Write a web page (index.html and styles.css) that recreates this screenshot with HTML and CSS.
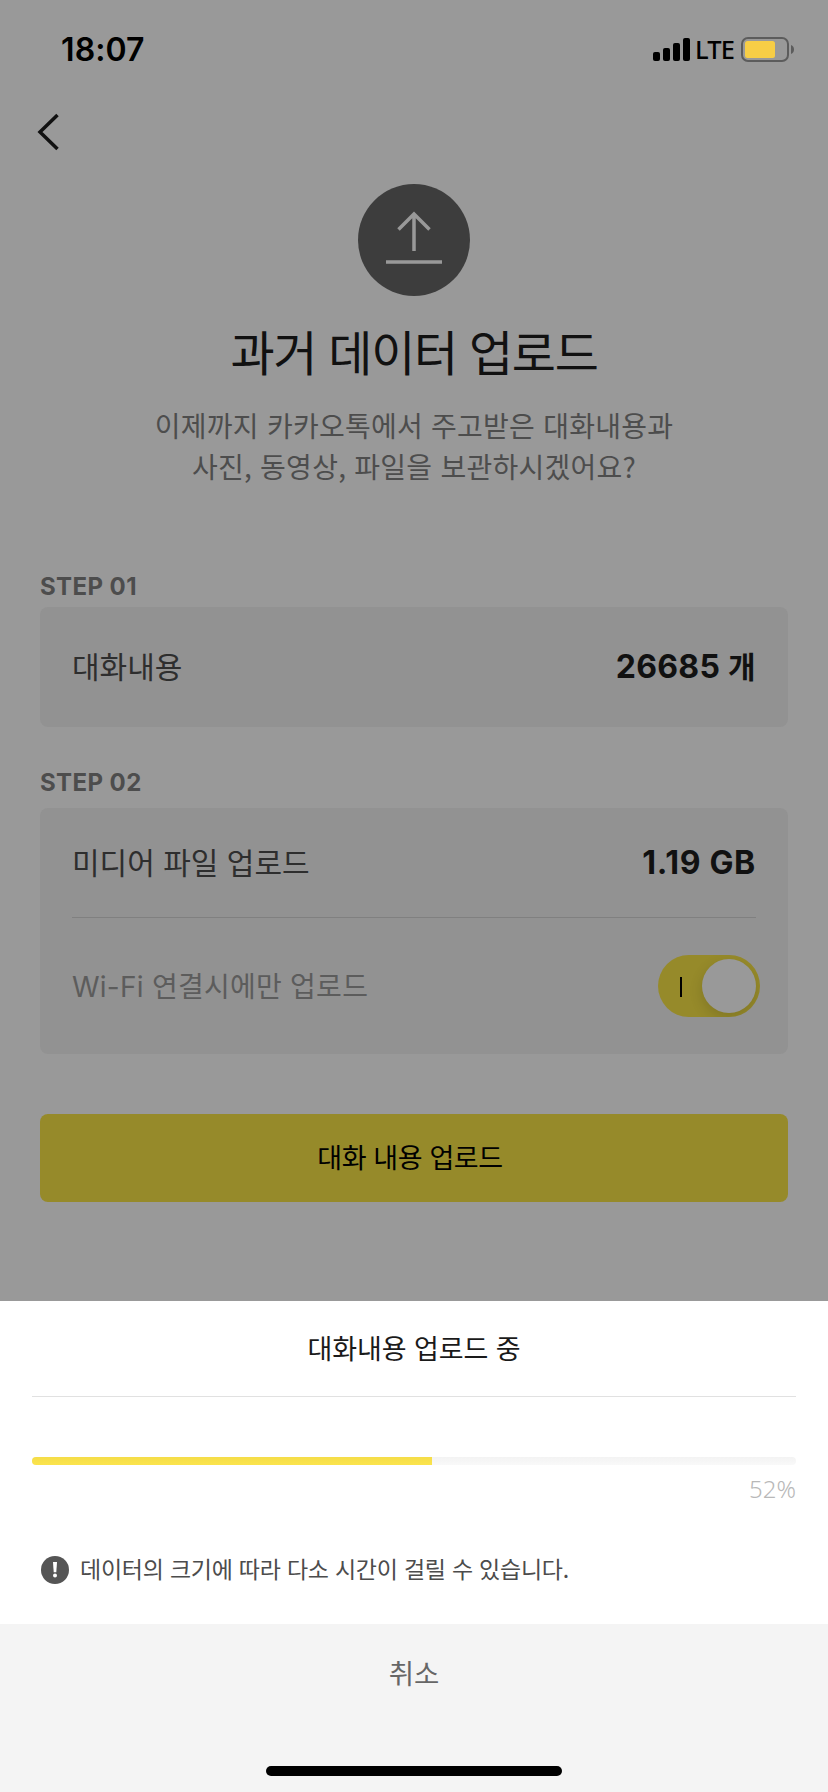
FILE: index.html
```html
<!DOCTYPE html>
<html lang="ko">
<head>
    <meta charset="UTF-8">
    <title>과거 데이터 업로드</title>
    <link rel="stylesheet" href="styles.css">
</head>
<body>
    <div class="screen">
        <!-- 상태바 -->
        <header class="status-bar">
            <span class="time">18:07</span>
            <div class="status-icons">
                <svg class="signal" width="37" height="23" viewBox="0 0 37 23">
                    <rect x="0" y="14" width="7" height="9" rx="2" />
                    <rect x="10" y="10" width="7" height="13" rx="2" />
                    <rect x="20" y="5" width="7" height="18" rx="2" />
                    <rect x="30" y="0" width="7" height="23" rx="2" />
                </svg>
                <span class="network">LTE</span>
                <svg class="battery" width="53" height="25" viewBox="0 0 53 25">
                    <rect x="1" y="1" width="46" height="23" rx="6" fill="none" stroke="#5c5c5c" stroke-width="2" />
                    <rect x="4" y="4" width="30" height="17" rx="2.5" fill="#f7ce46" />
                    <path d="M50 8c4 1.5 4 7.500 0 9z" fill="#5c5c5c" />
                </svg>
            </div>
        </header>

        <nav class="nav">
            <svg width="24" height="40" viewBox="0 0 24 40">
                <path d="M20.500 3L3 20l17.500 17" fill="none" stroke="#111" stroke-width="3.500" />
            </svg>
        </nav>

        <!-- 안내 -->
        <section class="intro">
            <svg class="upload-icon" width="112" height="112" viewBox="0 0 112 112">
                <circle cx="56" cy="56" r="56" fill="#3d3d3d" />
                <path d="M40.500 45.500L56 30l15.500 15.500M56 30v37M28 78h56" fill="none" stroke="#999" stroke-width="3.500" />
            </svg>
            <h1 class="title">과거 데이터 업로드</h1>
            <p class="desc">이제까지 카카오톡에서 주고받은 대화내용과<br>사진, 동영상, 파일을 보관하시겠어요?</p>
        </section>

        <!-- 업로드 단계 -->
        <main class="steps">
            <h2 class="step-name">STEP 01</h2>
            <div class="card card-chat">
                <div class="row">
                    <span class="label">대화내용</span>
                    <strong class="value">26685 <span class="unit">개</span></strong>
                </div>
            </div>

            <h2 class="step-name step-second">STEP 02</h2>
            <div class="card card-media">
                <div class="row row-size">
                    <span class="label">미디어 파일 업로드</span>
                    <strong class="value value-size">1.19 GB</strong>
                </div>
                <div class="row row-wifi">
                    <span class="label-sub">Wi-Fi 연결시에만 업로드</span>
                    <div class="toggle">
                        <span class="toggle-mark"></span>
                        <span class="toggle-knob"></span>
                    </div>
                </div>
            </div>

            <button class="upload-btn">대화 내용 업로드</button>
        </main>

        <!-- 진행 상태 시트 -->
        <section class="sheet">
            <div class="sheet-body">
                <h3 class="sheet-title">대화내용 업로드 중</h3>
                <div class="progress">
                    <div class="progress-fill" style="width: 52.4%"></div>
                </div>
                <div class="percent">52%</div>
                <div class="notice">
                    <svg width="28" height="28" viewBox="0 0 28 28">
                        <circle cx="14" cy="14" r="14" fill="#555" />
                        <path d="M12 6h4l-.7 10.300h-2.600z" fill="#fff" />
                        <circle cx="14" cy="19.500" r="2" fill="#fff" />
                    </svg>
                    <span class="notice-text">데이터의 크기에 따라 다소 시간이 걸릴 수 있습니다.</span>
                </div>
            </div>
            <footer class="sheet-footer">
                <button class="cancel-btn">취소</button>
                <div class="home-bar"></div>
            </footer>
        </section>
    </div>
</body>
</html>
```

FILE: styles.css
```css
* {
    box-sizing: border-box;
    margin: 0;
    padding: 0;
}

body {
    background: #999;
    font-family: "Noto Sans CJK KR", sans-serif;
    color: #111;
}

button {
    border: none;
    font-family: inherit;
}

svg {
    display: block;
    flex-shrink: 0;
}

.screen {
    display: flex;
    flex-direction: column;
    width: 828px;
    height: 1792px;
    overflow: hidden;
}

/* 상태바 */
.status-bar {
    display: flex;
    justify-content: space-between;
    height: 99px;
    padding: 0 34px 0 61px;
    color: #000;
    font-family: Inter, sans-serif;
}

.time {
    font-size: 32px;
    font-weight: 600;
    line-height: 100px;
    letter-spacing: 0.1px;
}

.status-icons {
    display: flex;
    align-items: center;
    height: 99px;
}

.network {
    width: 51px;
    margin-top: -2px;
    padding-left: 5px;
    font-family: "Noto Sans", sans-serif;
    font-size: 25.5px;
    font-weight: 500;
    letter-spacing: -0.8px;
}

/* 뒤로가기 */
.nav {
    height: 85px;
    padding: 13px 0 0 37px;
}

/* 안내 */
.intro {
    display: flex;
    flex-direction: column;
    align-items: center;
    height: 386px;
    text-align: center;
}

.title {
    margin-top: 19px;
    font-size: 48px;
    font-weight: 400;
    line-height: 70px;
    letter-spacing: -1.3px;
}

.desc {
    margin-top: 20px;
    color: #4d4d4d;
    font-size: 28px;
    line-height: 41.3px;
    letter-spacing: 0.25px;
}

/* 단계 */
.steps {
    display: flex;
    flex-direction: column;
    height: 731px;
    padding: 0 40px;
}

.step-name {
    height: 37px;
    color: #4d4d4d;
    font-family: Inter, sans-serif;
    font-size: 24px;
    font-weight: 700;
    line-height: 33px;
    letter-spacing: 0.4px;
}

.step-second {
    height: 42px;
    margin-top: 39px;
}

.card {
    padding: 0 32px;
    border-radius: 8px;
    background: #929292;
}

.card-chat .row {
    height: 120px;
}

.card-media {
    height: 246px;
}

.row {
    display: flex;
    align-items: center;
    justify-content: space-between;
}

.row-size {
    height: 110px;
    border-bottom: 1px solid #808080;
}

.row-wifi {
    height: 136px;
}

.label {
    margin-top: -4px;
    color: #2e2e2e;
    font-size: 30px;
}

.value {
    font-family: Inter, "Noto Sans CJK KR", sans-serif;
    font-size: 32px;
    font-weight: 700;
    line-height: 40px;
    letter-spacing: 0.3px;
}

.value-size {
    letter-spacing: 0.7px;
}

.unit {
    font-size: 30px;
    line-height: 1;
}

.label-sub {
    margin-top: -2px;
    color: #5c5c5c;
    font-family: Inter, "Noto Sans CJK KR", sans-serif;
    font-size: 28px;
    letter-spacing: 0.25px;
}

.toggle {
    display: flex;
    align-items: center;
    justify-content: space-between;
    width: 102px;
    height: 62px;
    margin-right: -4px;
    padding: 0 4px 0 22px;
    border-radius: 31px;
    background: #968a2a;
    overflow: hidden;
}

.toggle-mark {
    width: 2px;
    height: 20px;
    margin-top: 2px;
    background: #000;
}

.toggle-knob {
    width: 54px;
    height: 54px;
    border-radius: 50%;
    background: #999;
    box-shadow: 0 5px 14px rgba(0, 0, 0, 0.14);
}

.upload-btn {
    height: 88px;
    margin-top: 60px;
    padding: 0 8px 4px 0;
    border-radius: 8px;
    background: #968a2a;
    color: #000;
    font-size: 27px;
    letter-spacing: -0.4px;
}

/* 시트 */
.sheet {
    display: flex;
    flex: 1;
    flex-direction: column;
    background: #fff;
}

.sheet-body {
    height: 323px;
    padding: 0 32px;
}

.sheet-title {
    height: 96px;
    border-bottom: 1px solid #e1e1e1;
    color: #1a1a1a;
    font-size: 27px;
    font-weight: 400;
    line-height: 94px;
    letter-spacing: -0.1px;
    text-align: center;
}

.progress {
    height: 8px;
    margin-top: 60px;
    border-radius: 4px;
    background: linear-gradient(#f3f3f3, #f9f9f9);
    overflow: hidden;
}

.progress-fill {
    height: 100%;
    background: linear-gradient(#f5dd48, #fbe44d);
}

.percent {
    margin-top: 8px;
    color: #b8b8b8;
    font-family: "Noto Sans", sans-serif;
    font-size: 24px;
    font-weight: 300;
    line-height: 32px;
    text-align: right;
}

.notice {
    display: flex;
    align-items: center;
    gap: 11px;
    height: 32px;
    margin-top: 49px;
    padding-left: 9px;
}

.notice-text {
    margin-top: -4px;
    color: #4c4c4c;
    font-size: 23px;
    letter-spacing: -0.24px;
}

.sheet-footer {
    display: flex;
    flex: 1;
    flex-direction: column;
    align-items: center;
    justify-content: space-between;
    padding: 28px 0 16px;
    background: #f4f4f4;
}

.cancel-btn {
    background: none;
    color: #666;
    font-size: 27.5px;
    line-height: 40px;
}

.home-bar {
    width: 296px;
    height: 10px;
    border-radius: 5px;
    background: #000;
}
```
